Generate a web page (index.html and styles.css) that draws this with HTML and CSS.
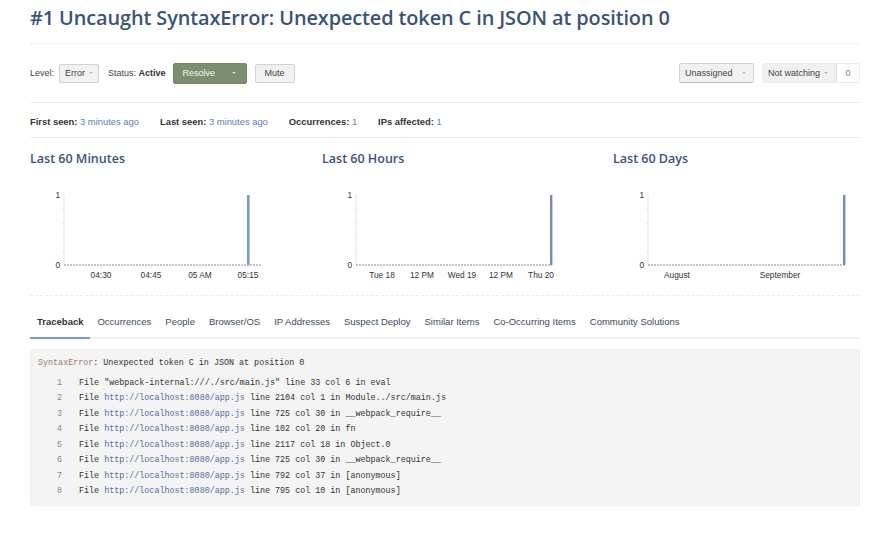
FILE: index.html
```html
<!DOCTYPE html>
<html>
<head>
<meta charset="utf-8">
<link rel="stylesheet" href="styles.css">
</head>
<body>
<div class="page">
  <h1 class="title">#1 Uncaught SyntaxError: Unexpected token C in JSON at position 0</h1>

  <div class="controls">
    <div class="controls-left">
      <span class="lbl">Level:</span>
      <span class="btn btn-sm">Error <span class="caret"></span></span>
      <span class="lbl status">Status: <b>Active</b></span>
      <span class="btn btn-green">Resolve <span class="caret caret-light"></span></span>
      <span class="btn btn-sm btn-mute">Mute</span>
    </div>
    <div class="controls-right">
      <span class="btn btn-sm btn-assign">Unassigned <span class="caret"></span></span>
      <span class="watch-group">
        <span class="btn btn-sm btn-watch">Not watching <span class="caret"></span></span><span class="count">0</span>
      </span>
    </div>
  </div>

  <div class="stats">
    <span class="stat"><b>First seen:</b> <a>3 minutes ago</a></span>
    <span class="stat"><b>Last seen:</b> <a>3 minutes ago</a></span>
    <span class="stat"><b>Occurrences:</b> <a>1</a></span>
    <span class="stat"><b>IPs affected:</b> <a>1</a></span>
  </div>

  <div class="charts">
    <div class="chart-col">
      <h2 class="chart-title">Last 60 Minutes</h2>
      <svg class="chart" width="240" height="105" viewBox="0 0 240 105">
        <g class="yticks">
          <line x1="12" y1="15" x2="14" y2="15"/><line x1="12" y1="29" x2="14" y2="29"/><line x1="12" y1="43" x2="14" y2="43"/><line x1="12" y1="57" x2="14" y2="57"/><line x1="12" y1="71" x2="14" y2="71"/>
        </g>
        <line class="axis" x1="14" y1="14" x2="14" y2="85"/>
        <line class="base" x1="14" y1="85" x2="212" y2="85"/>
        <g class="xticks">
          <line x1="51" y1="86" x2="51" y2="88"/><line x1="101" y1="86" x2="101" y2="88"/><line x1="150" y1="86" x2="150" y2="88"/><line x1="198" y1="86" x2="198" y2="88"/>
        </g>
        <rect class="bar" x="197" y="15" width="2.6" height="70"/>
        <text class="ylab" x="10" y="18">1</text>
        <text class="ylab" x="10" y="88">0</text>
        <text class="xlab" x="51" y="98">04:30</text>
        <text class="xlab" x="101" y="98">04:45</text>
        <text class="xlab" x="150" y="98">05 AM</text>
        <text class="xlab" x="198" y="98">05:15</text>
      </svg>
    </div>
    <div class="chart-col">
      <h2 class="chart-title">Last 60 Hours</h2>
      <svg class="chart" width="240" height="105" viewBox="0 0 240 105">
        <g class="yticks">
          <line x1="12" y1="15" x2="14" y2="15"/><line x1="12" y1="29" x2="14" y2="29"/><line x1="12" y1="43" x2="14" y2="43"/><line x1="12" y1="57" x2="14" y2="57"/><line x1="12" y1="71" x2="14" y2="71"/>
        </g>
        <line class="axis" x1="14" y1="14" x2="14" y2="85"/>
        <line class="base" x1="14" y1="85" x2="210" y2="85"/>
        <g class="xticks">
          <line x1="40" y1="86" x2="40" y2="88"/><line x1="80" y1="86" x2="80" y2="88"/><line x1="120" y1="86" x2="120" y2="88"/><line x1="159" y1="86" x2="159" y2="88"/><line x1="199" y1="86" x2="199" y2="88"/>
        </g>
        <rect class="bar bar-dot" x="208" y="15" width="2.4" height="70"/>
        <text class="ylab" x="10" y="18">1</text>
        <text class="ylab" x="10" y="88">0</text>
        <text class="xlab" x="40" y="98">Tue 18</text>
        <text class="xlab" x="80" y="98">12 PM</text>
        <text class="xlab" x="120" y="98">Wed 19</text>
        <text class="xlab" x="159" y="98">12 PM</text>
        <text class="xlab" x="199" y="98">Thu 20</text>
      </svg>
    </div>
    <div class="chart-col">
      <h2 class="chart-title">Last 60 Days</h2>
      <svg class="chart" width="240" height="105" viewBox="0 0 240 105">
        <g class="yticks">
          <line x1="13" y1="15" x2="15" y2="15"/><line x1="13" y1="29" x2="15" y2="29"/><line x1="13" y1="43" x2="15" y2="43"/><line x1="13" y1="57" x2="15" y2="57"/><line x1="13" y1="71" x2="15" y2="71"/>
        </g>
        <line class="axis" x1="15" y1="14" x2="15" y2="85"/>
        <line class="base" x1="15" y1="85" x2="212" y2="85"/>
        <g class="xticks">
          <line x1="44" y1="86" x2="44" y2="88"/><line x1="147" y1="86" x2="147" y2="88"/>
        </g>
        <rect class="bar bar-dot" x="210" y="15" width="2.4" height="70"/>
        <text class="ylab" x="11" y="18">1</text>
        <text class="ylab" x="11" y="88">0</text>
        <text class="xlab" x="44" y="98">August</text>
        <text class="xlab" x="147" y="98">September</text>
      </svg>
    </div>
  </div>

  <div class="tabs">
    <a class="tab active">Traceback</a>
    <a class="tab">Occurrences</a>
    <a class="tab">People</a>
    <a class="tab">Browser/OS</a>
    <a class="tab">IP Addresses</a>
    <a class="tab">Suspect Deploy</a>
    <a class="tab">Similar Items</a>
    <a class="tab">Co-Occurring Items</a>
    <a class="tab">Community Solutions</a>
  </div>

  <div class="trace">
    <div class="trace-head"><span class="exc">SyntaxError</span>: Unexpected token C in JSON at position 0</div>
    <ol class="frames">
      <li><span class="num">1</span>File "webpack-internal:///./src/main.js" line 33 col 6 in eval</li>
      <li><span class="num">2</span>File <a>http://localhost:8080/app.js</a> line 2104 col 1 in Module../src/main.js</li>
      <li><span class="num">3</span>File <a>http://localhost:8080/app.js</a> line 725 col 30 in __webpack_require__</li>
      <li><span class="num">4</span>File <a>http://localhost:8080/app.js</a> line 102 col 20 in fn</li>
      <li><span class="num">5</span>File <a>http://localhost:8080/app.js</a> line 2117 col 18 in Object.0</li>
      <li><span class="num">6</span>File <a>http://localhost:8080/app.js</a> line 725 col 30 in __webpack_require__</li>
      <li><span class="num">7</span>File <a>http://localhost:8080/app.js</a> line 792 col 37 in [anonymous]</li>
      <li><span class="num">8</span>File <a>http://localhost:8080/app.js</a> line 795 col 10 in [anonymous]</li>
    </ol>
  </div>
</div>
</body>
</html>
```

FILE: styles.css
```css
html, body {
  margin: 0;
  padding: 0;
  background: #fff;
}
body {
  font-family: "Liberation Sans", Arial, sans-serif;
  font-size: 9.5px;
  color: #333;
}
.page {
  width: 830px;
  padding-left: 30px;
}
.title {
  margin: 0;
  padding-top: 4px;
  height: 39px;
  line-height: 28px;
  font-family: "Open Sans", sans-serif;
  font-weight: 600;
  font-size: 19.9px;
  color: #3b5377;
  letter-spacing: -0.1px;
  border-bottom: 1px dotted #e6e6e6;
}
.controls {
  display: flex;
  justify-content: space-between;
  align-items: center;
  height: 58px;
  border-bottom: 1px solid #eeeeee;
  font-size: 9px;
}
.controls-left, .controls-right {
  display: flex;
  align-items: center;
}
.lbl {
  color: #444;
  margin-right: 5px;
}
.status {
  margin-left: 9px;
}
.status b {
  color: #333;
}
.btn {
  display: inline-flex;
  align-items: center;
  box-sizing: border-box;
  height: 19px;
  padding: 0 5px;
  border: 1px solid #d3d3d3;
  border-radius: 2px;
  background: #f1f1f1;
  color: #444;
  font-size: 9px;
  white-space: nowrap;
}
.caret {
  display: inline-block;
  width: 0;
  height: 0;
  margin-left: 4px;
  border-left: 2.5px solid transparent;
  border-right: 2.5px solid transparent;
  border-top: 2.5px solid #bbb;
}
.caret-light {
  border-top-color: #d6dccf;
  margin-left: 0;
}
.btn-green {
  height: 21px;
  width: 74px;
  justify-content: space-between;
  padding: 0 10px 0 9px;
  background: #7b8f6e;
  border-color: #74886a;
  color: #f3f5f0;
  margin-left: 2px;
}
.btn-mute {
  margin-left: 8px;
  padding: 0 9px;
}
.btn-assign {
  width: 75px;
  height: 20px;
  justify-content: space-between;
  padding: 0 7px 0 5px;
  border-bottom-color: #b9c3d3;
}
.watch-group {
  display: inline-flex;
  margin-left: 8px;
  border: 1px solid #eee;
  border-radius: 2px;
}
.btn-watch {
  width: 74px;
  height: 18px;
  border: none;
  border-right: 1px solid #e0e0e0;
  padding: 0 4px 0 5px;
  border-radius: 0;
}
.count {
  width: 22px;
  text-align: center;
  line-height: 18px;
  color: #5d7fb3;
  background: #fff;
}
.stats {
  display: flex;
  gap: 21px;
  height: 31px;
  padding-top: 3px;
  line-height: 31px;
  border-bottom: 1px solid #eeeeee;
  font-size: 9.4px;
}
.stat b {
  color: #333;
}
.stat a {
  color: #5c7db0;
}
.charts {
  display: grid;
  grid-template-columns: 292px 291px 1fr;
  height: 157px;
  border-bottom: 1px dashed #ececec;
}
.chart-title {
  margin: 12px 0 0 0;
  line-height: 18px;
  font-family: "Open Sans", sans-serif;
  font-weight: 600;
  font-size: 12.5px;
  color: #3b5377;
}
.chart {
  display: block;
  margin: 12px 0 0 20px;
}
.chart .axis {
  stroke: #e3e5ea;
  stroke-width: 1;
}
.chart .yticks line, .chart .xticks line {
  stroke: #dcdfe5;
  stroke-width: 0.8;
}
.chart .base {
  stroke: #a9b4c9;
  stroke-width: 1.4;
  stroke-dasharray: 2 1;
}
.chart .bar {
  fill: #7898cf;
}
.chart .bar-dot {
  fill: #6f8cc2;
}
.chart text {
  font-family: "Liberation Sans", Arial, sans-serif;
  font-size: 8.3px;
  fill: #333;
}
.chart .ylab {
  text-anchor: end;
}
.chart .xlab {
  text-anchor: middle;
}
.tabs {
  display: flex;
  height: 41px;
  align-items: flex-end;
  border-bottom: 2px solid #f0f0f0;
}
.tab {
  display: block;
  padding: 0 7px 8px 7px;
  line-height: 14px;
  margin-bottom: -2px;
  border-bottom: 2px solid transparent;
  color: #3c4a5c;
  font-size: 9.5px;
}
.tab.active {
  font-weight: bold;
  color: #333;
  border-bottom-color: #7a9acc;
}
.trace {
  margin-top: 10px;
  box-sizing: border-box;
  height: 157px;
  padding: 7px 0 0 7px;
  background: #f4f4f4;
  border: 1px dotted #e4e4e4;
  border-radius: 3px;
  font-family: "Liberation Mono", "Courier New", monospace;
  font-size: 8.4px;
  color: #333;
}
.trace-head {
  line-height: 13px;
}
.exc {
  color: #a27a6c;
}
.frames {
  list-style: none;
  margin: 6px 0 0 0;
  padding: 0;
}
.frames li {
  line-height: 15.45px;
  white-space: pre;
}
.num {
  display: inline-block;
  width: 24px;
  margin-right: 17px;
  text-align: right;
  color: #888;
}
.frames a {
  color: #4f6fa3;
}
```
